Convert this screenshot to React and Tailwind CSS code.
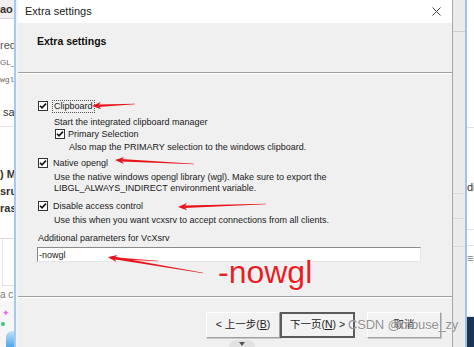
import React from "react";

const ui = { fontFamily: '"Liberation Sans", "Noto Sans CJK SC", Arial, sans-serif' };

function Arrow({ tip, tail, head = 9, width = 3.6, thick = 1.3 }) {
  const [x1, y1] = tip;
  const [x2, y2] = tail;
  const L = Math.hypot(x2 - x1, y2 - y1);
  const ux = (x2 - x1) / L;
  const uy = (y2 - y1) / L;
  const nx = -uy;
  const ny = ux;
  const bx = x1 + ux * head * 0.7;
  const by = y1 + uy * head * 0.7;
  const hx = x1 + ux * head;
  const hy = y1 + uy * head;
  const p = (a, b) => `${a.toFixed(1)},${b.toFixed(1)}`;
  const headPts = [
    p(x1, y1),
    p(hx + nx * width, hy + ny * width),
    p(bx, by),
    p(hx - nx * width, hy - ny * width),
  ].join(" ");
  const shaftPts = [
    p(bx + nx * thick, by + ny * thick),
    p(x2 + nx * 0.35, y2 + ny * 0.35),
    p(x2 - nx * 0.35, y2 - ny * 0.35),
    p(bx - nx * thick, by - ny * thick),
  ].join(" ");
  return (
    <g fill="#e8141b">
      <polygon points={headPts} />
      <polygon points={shaftPts} />
    </g>
  );
}

function Check({ className = "" }) {
  return (
    <div className={"w-[10px] h-[10px] border border-[#333] bg-white flex items-center justify-center shrink-0 " + className}>
      <svg width="8" height="8" viewBox="0 0 8 8">
        <path d="M1 3.8 L3 5.9 L7 1.6" stroke="#111" strokeWidth="1.6" fill="none" />
      </svg>
    </div>
  );
}

function Btn({ children, primary }) {
  return (
    <div
      className={
        "h-[26px] flex items-center justify-center text-[10.5px] text-[#222] bg-[#f2f2f2] " +
        (primary
          ? "w-[75px] border-2 border-[#5a5a5a]"
          : "w-[74px] border border-t-white border-l-white border-b-[#a0a0a0] border-r-[#a0a0a0] shadow-[1px_1px_0_#c8c8c8]")
      }
    >
      {children}
    </div>
  );
}

function LeftStrip() {
  return (
    <div className="w-[18px] h-full flex shrink-0">
      <div className="w-[14px] h-full overflow-hidden flex flex-col bg-white text-[#333] whitespace-nowrap">
        <div className="h-[19px] bg-[#f1f1f1] border-b border-[#d6d6d6] flex items-center text-[11px] font-semibold">ao</div>
        <div className="h-[17px]" />
        <div className="h-[18px] flex items-center text-[11px] text-[#555]">red</div>
        <div className="h-[17px] flex items-center text-[8px] text-[#666]">GL_</div>
        <div className="h-[17px] flex items-center text-[8px] text-[#666] font-mono">wgl</div>
        <div className="h-[19px]" />
        <div className="h-[10px] flex items-center text-[11px] pl-[3px]">sa</div>
        <div className="h-[10px] border-b border-[#e2e2e2]" />
        <div className="h-[38px]" />
        <div className="h-[18px] flex items-center text-[11px] font-bold">) M</div>
        <div className="h-[17px] flex items-center text-[11px] font-bold">sru</div>
        <div className="h-[17px] flex items-center text-[11px] font-bold">ras</div>
        <div className="h-[22px] border-b border-[#dcdcdc]" />
        <div className="h-[47px] border-b border-[#e2e2e2] bg-white ml-[2px] border-l" />
        <div className="h-[16px] flex items-center text-[10px] text-[#777]">a c</div>
        <div className="flex-1 relative bg-[#f6f6f6]">
          <span className="absolute left-[2px] top-[5px] text-[9px] text-[#e26be0]">✦</span>
          <span className="absolute left-[1px] top-[20px] w-[4px] h-[4px] rounded-full bg-[#3cc47a]" />
          <span className="absolute right-0 bottom-0 w-[8px] h-[16px] bg-gradient-to-t from-[#4aa7e8] to-[#bfe3fb] rounded-tl-[6px]" />
        </div>
      </div>
      <div className="w-[2px] h-full bg-[#a8c8ee]" />
      <div className="w-[2px] h-full bg-[#f4f4f4]" />
    </div>
  );
}

function RightStrip() {
  return (
    <div className="w-[21px] h-full flex shrink-0">
      <div className="w-[12px] h-full flex flex-col bg-[#ebebeb]">
        <div className="h-[32px] border-b border-[#cfcfcf]" />
        <div className="h-[162px] border-b border-[#dadada]" />
        <div className="h-[25px] border-b border-[#dadada]" />
        <div className="h-[28px] border-b border-[#dadada]" />
        <div className="flex-1" />
      </div>
      <div className="w-[2px] h-full bg-[#9fc2ea]" />
      <div className="w-[7px] h-full flex flex-col bg-white text-[11px] text-[#333] overflow-hidden whitespace-nowrap">
        <div className="h-[128px] border-b border-[#e2e2e2]" />
        <div className="h-[52px]" />
        <div className="h-[14px] flex items-center">dr</div>
        <div className="h-[36px] border-b border-[#e2e2e2]" />
        <div className="h-[16px] border-b border-[#e2e2e2]" />
        <div className="h-[24px] flex items-center text-[#777]">≡</div>
        <div className="h-[47px] border-b border-[#e2e2e2]" />
        <div className="flex-1 bg-[#1c3557]" />
      </div>
    </div>
  );
}

function Dialog() {
  return (
    <div className="w-[435px] h-full flex flex-col border-r border-[#a8a8a8] bg-[#f0f0f0] shrink-0" style={ui}>
      <div className="h-[23px] bg-white flex items-center justify-between pl-[7px] pr-[11px]">
        <span className="text-[11px] text-[#222]">Extra settings</span>
        <svg width="9" height="9" viewBox="0 0 9 9">
          <path d="M0.5 0.5 L8.5 8.5 M8.5 0.5 L0.5 8.5" stroke="#444" strokeWidth="1" />
        </svg>
      </div>
      <div className="h-[49px] pl-[19px] pt-[11px]">
        <div className="text-[10.5px] font-bold text-[#111]">Extra settings</div>
      </div>
      <div className="h-[2px] border-t border-[#a0a0a0] border-b border-b-white" />
      <div className="h-[222px] pl-[20px] pt-[26px] text-[9px] text-[#1a1a1a] leading-[12px]">
        <div className="h-[12px] flex items-center">
          <Check />
          <span className="ml-[4px] px-[1px] border border-dotted border-[#555] leading-[11px]">Clipboard</span>
        </div>
        <div className="mt-[4px] pl-[16px]">Start the integrated clipboard manager</div>
        <div className="h-[12px] flex items-center pl-[17px]">
          <Check />
          <span className="ml-[3px]">Primary Selection</span>
        </div>
        <div className="mt-[1px] pl-[31px]">Also map the PRIMARY selection to the windows clipboard.</div>
        <div className="mt-[4px] h-[12px] flex items-center">
          <Check />
          <span className="ml-[5px]">Native opengl</span>
        </div>
        <div className="mt-[3px] pl-[16px] leading-[11px]">
          Use the native windows opengl library (wgl). Make sure to export the
          <br />
          LIBGL_ALWAYS_INDIRECT environment variable.
        </div>
        <div className="mt-[6px] h-[12px] flex items-center">
          <Check />
          <span className="ml-[5px]">Disable access control</span>
        </div>
        <div className="mt-[2px] pl-[16px]">Use this when you want vcxsrv to accept connections from all clients.</div>
        <div className="mt-[6px]">Additional parameters for VcXsrv</div>
        <div className="mt-[3px] -ml-[1px] w-[384px] h-[15px] bg-white border border-t-[#8a8a8a] border-l-[#8a8a8a] border-b-[#e6e6e6] border-r-[#e6e6e6] flex items-center pl-[1px] text-[9px]">
          -nowgl
        </div>
      </div>
      <div className="h-[2px] border-t border-[#a0a0a0] border-b border-b-white" />
      <div className="flex-1 flex justify-end items-start pt-[14px] pr-[11px]">
        <Btn>&lt; 上一步(<u>B</u>)</Btn>
        <Btn primary>下一页(<u>N</u>) &gt;</Btn>
        <div className="w-[12px]" />
        <Btn>取消</Btn>
      </div>
    </div>
  );
}

export default function App() {
  return (
    <div className="relative w-[474px] h-[347px] overflow-hidden flex bg-white" style={ui}>
      <LeftStrip />
      <Dialog />
      <RightStrip />

      {/* annotations drawn on top of the screenshot */}
      <svg className="absolute inset-0 pointer-events-none" width="474" height="347">
        <Arrow tip={[92, 106]} tail={[135, 104]} />
        <Arrow tip={[115, 160]} tail={[194, 164]} />
        <Arrow tip={[178, 207]} tail={[266, 204]} />
        <Arrow tip={[108, 257]} tail={[203, 273]} />
        <Arrow tip={[110, 258]} tail={[158, 261]} head={0.1} thick={0.9} />
      </svg>
      <div className="absolute left-[218px] top-[256px] text-[32px] leading-none text-[#ea1b22] [text-shadow:0_0_2px_#fff,0_0_2px_#fff]">
        -nowgl
      </div>
      <div className="absolute left-[348px] top-[318px] text-[13px] leading-none tracking-[-0.2px] text-[#7a7a7a]/85 [text-shadow:0_0_1px_#fff]">
        CSDN @mouse_zy
      </div>
      <div className="absolute left-[229px] top-[340px] w-[26px] h-[14px] rounded-full bg-[#e2e2e2] flex justify-center pt-[2px]">
        <svg width="6" height="4" viewBox="0 0 6 4">
          <path d="M0 0 L6 0 L3 4 Z" fill="#555" />
        </svg>
      </div>
    </div>
  );
}
